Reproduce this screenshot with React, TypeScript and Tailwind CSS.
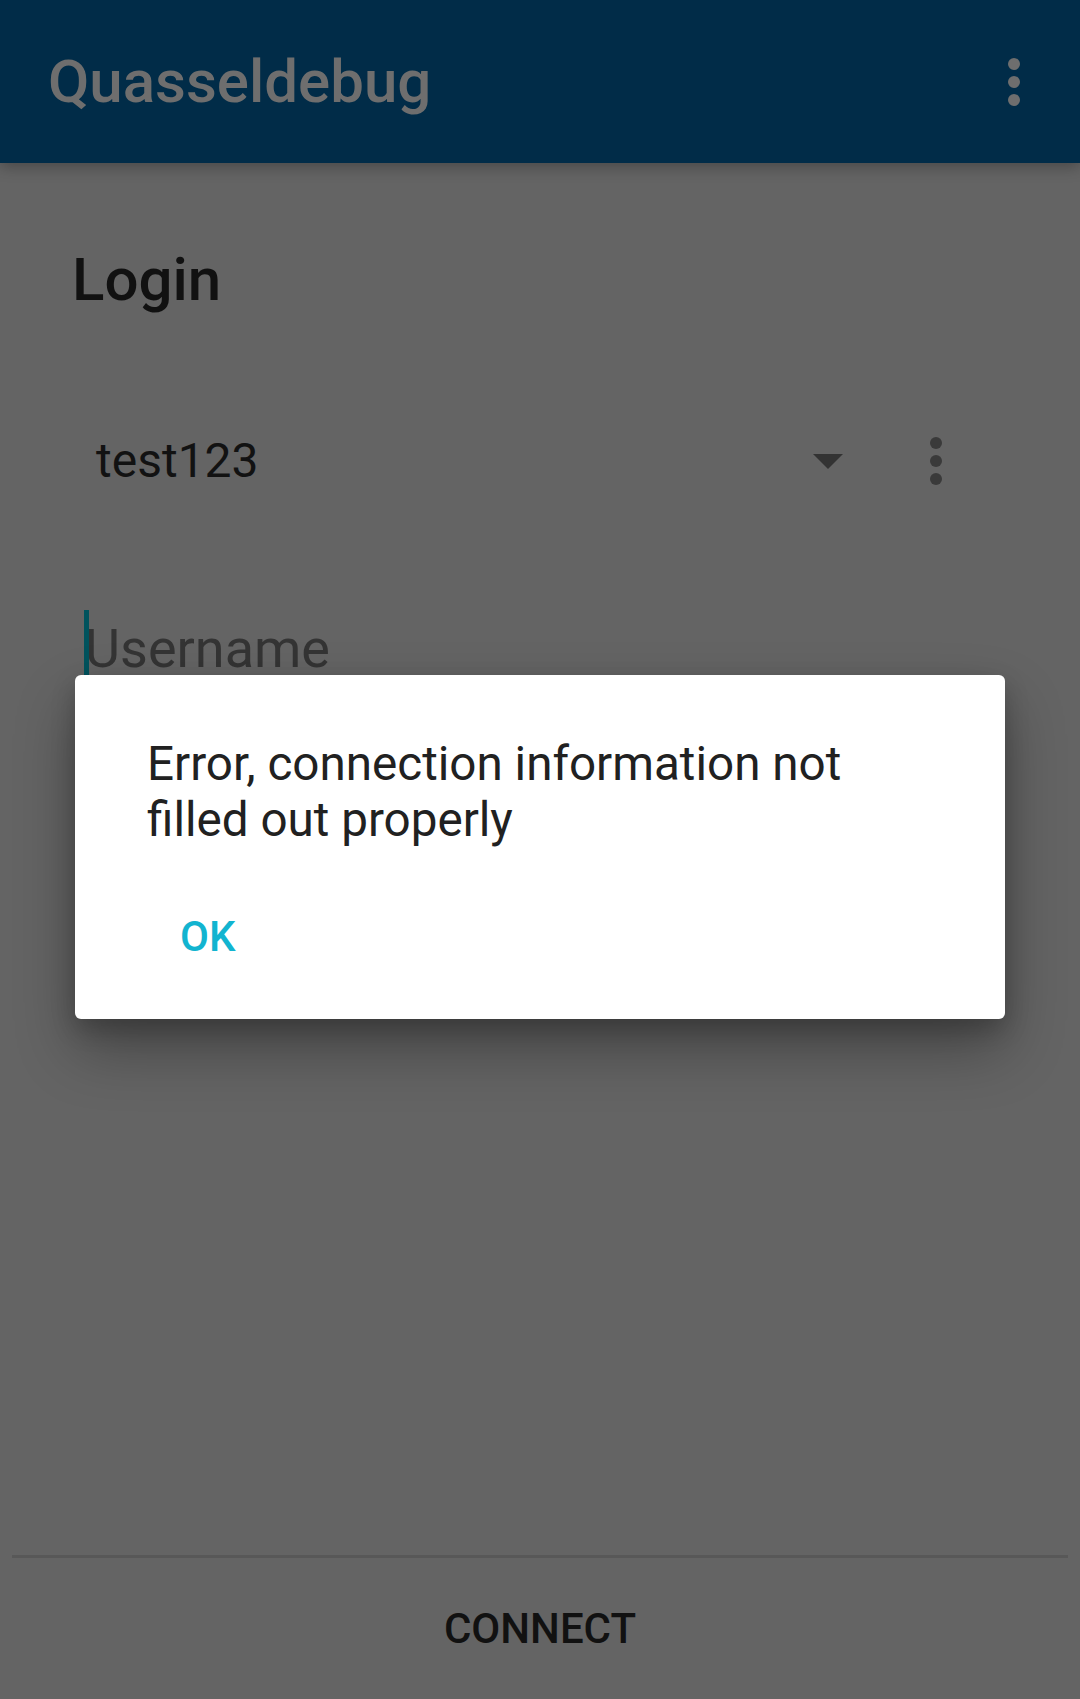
import React from "react";

function Dots({ color, size }: { color: string; size: string }) {
  return (
    <div className="flex flex-col items-center gap-[6px]">
      <span className={`${size} rounded-full ${color}`} />
      <span className={`${size} rounded-full ${color}`} />
      <span className={`${size} rounded-full ${color}`} />
    </div>
  );
}

export default function App() {
  return (
    <div className="relative flex h-[1699px] w-[1080px] flex-col overflow-hidden bg-[#646464] font-['Roboto','Noto_Sans',sans-serif]">
      {/* App bar */}
      <header className="relative z-10 flex h-[163px] shrink-0 items-center justify-between bg-[#012c48] pl-[48px] pr-[60px] shadow-[0_4px_14px_rgba(0,0,0,0.28)]">
        <h1 className="text-[60px] font-medium leading-none text-[#6e6e6e]">
          Quasseldebug
        </h1>
        <Dots color="bg-[#6e6e6e]" size="w-[12px] h-[12px]" />
      </header>

      {/* Login form */}
      <main className="flex flex-1 flex-col">
        <h2 className="mt-[87px] pl-[72px] text-[60px] font-medium leading-none text-[#111111]">
          Login
        </h2>

        <div className="mt-[103px] flex h-[96px] items-center pl-[96px]">
          <span className="flex-1 text-[48px] leading-none text-[#121212]">
            test123
          </span>
          <svg
            width="30"
            height="15"
            viewBox="0 0 30 15"
            className="mr-[87px]"
          >
            <path d="M0 0 L30 0 L15 15 Z" fill="#333333" />
          </svg>
          <div className="mr-[138px]">
            <Dots color="bg-[#3a3a3a]" size="w-[12px] h-[12px]" />
          </div>
        </div>

        <div className="relative mt-[99px] flex h-[81px] items-center pl-[85px]">
          <span className="absolute left-[84px] top-[2px] h-[80px] w-[5px] bg-[#00535d]" />
          <span className="text-[54px] leading-none text-[#343434]">
            Username
          </span>
        </div>
      </main>

      {/* Bottom action */}
      <div className="mx-[12px] h-[3px] shrink-0 bg-[#585858]" />
      <div className="flex h-[141px] shrink-0 items-center justify-center">
        <span className="text-[42px] font-medium leading-none text-[#111111]">
          CONNECT
        </span>
      </div>

      {/* Alert dialog */}
      <div className="absolute left-[75px] top-[675px] z-20 h-[344px] w-[930px] rounded-[6px] bg-white shadow-[0_30px_60px_rgba(0,0,0,0.32),0_10px_24px_rgba(0,0,0,0.2)]">
        <p className="pl-[72px] pr-[72px] pt-[61px] text-[47.6px] leading-[56px] text-[#212121]">
          Error, connection information not filled out properly
        </p>
        <button className="mt-[65px] ml-[105px] text-[42px] font-medium leading-[48px] text-[#12b4d0]">
          OK
        </button>
      </div>
    </div>
  );
}
